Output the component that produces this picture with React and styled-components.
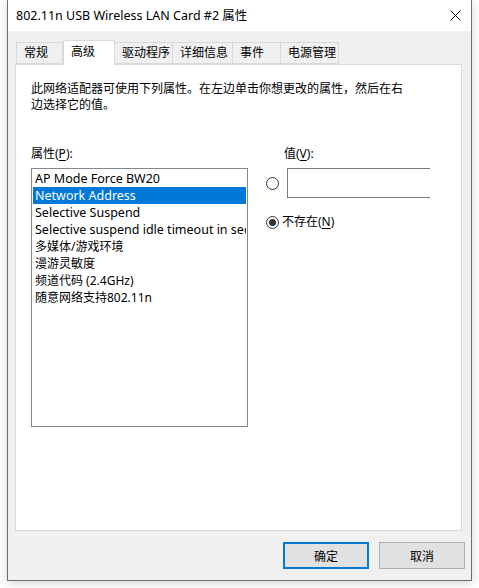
import React from "react";
import styled, { createGlobalStyle } from "styled-components";

const Global = createGlobalStyle`
  html, body { margin: 0; padding: 0; background: #ffffff; }
  body { font-family: "Segoe UI", "Noto Sans", "Noto Sans CJK SC", sans-serif; font-size: 12px; color: #000; }
`;

const Page = styled.div`
  width: 479px;
  height: 588px;
  padding-left: 7px;
  box-sizing: border-box;
  overflow: hidden;
`;

const Win = styled.div`
  width: 465px;
  height: 581px;
  box-sizing: border-box;
  border: 1px solid #6e6e6e;
  border-top: none;
  background: #f0f0f0;
  box-shadow: 0 2px 10px rgba(0, 0, 0, 0.18);
  display: flex;
  flex-direction: column;
`;

const TitleBar = styled.div`
  height: 31px;
  background: #ffffff;
  display: flex;
  align-items: center;
  justify-content: space-between;
  padding: 0 10px 0 8px;
  flex-shrink: 0;
`;

const Title = styled.div`
  font-size: 12.5px;
  line-height: 16px;
  margin-top: 1px;
`;

const Body = styled.div`
  flex: 1;
  display: flex;
  flex-direction: column;
  padding: 9px 9px 0 7px;
`;

const TabRow = styled.div`
  display: flex;
  align-items: flex-end;
  height: 24px;
  padding-left: 1px;
  position: relative;
  z-index: 1;
`;

const Tab = styled.div`
  box-sizing: border-box;
  height: ${(p) => (p.$active ? "25px" : "22px")};
  margin-bottom: ${(p) => (p.$active ? "-1px" : "0")};
  width: ${(p) => p.$w}px;
  padding-left: 7px;
  border: 1px solid #d9d9d9;
  border-left: ${(p) => (p.$first || p.$active ? "1px solid #d9d9d9" : "none")};
  border-bottom: ${(p) => (p.$active ? "none" : "1px solid #d9d9d9")};
  background: ${(p) => (p.$active ? "#ffffff" : "#f0f0f0")};
  display: flex;
  align-items: ${(p) => (p.$active ? "flex-start" : "center")};
  padding-top: ${(p) => (p.$active ? "3px" : "0")};
  font-size: 12px;
  line-height: 16px;
`;

const Panel = styled.div`
  width: 447px;
  height: 467px;
  box-sizing: border-box;
  background: #ffffff;
  border: 1px solid #d9d9d9;
  padding: 16px 15px 0 15px;
  display: flex;
  flex-direction: column;
`;

const Desc = styled.div`
  width: 380px;
  line-height: 16px;
  font-size: 12px;
`;

const Columns = styled.div`
  display: flex;
  margin-top: 33px;
`;

const LeftCol = styled.div`
  width: 217px;
  display: flex;
  flex-direction: column;
`;

const Label = styled.div`
  line-height: 16px;
  height: 16px;
  margin-bottom: 6px;
  padding-left: ${(p) => p.$indent || 0}px;
`;

const U = styled.span`
  text-decoration: underline;
  text-underline-offset: 2px;
`;

const ListBox = styled.div`
  box-sizing: border-box;
  height: 259px;
  border: 1px solid #828790;
  padding: 1px;
  overflow: hidden;
`;

const Item = styled.div`
  height: 17px;
  line-height: 17px;
  padding-left: 2px;
  white-space: nowrap;
  overflow: hidden;
  font-size: ${(p) => (p.$latin ? "12.5px" : "12px")};
  background: ${(p) => (p.$sel ? "#0078d7" : "transparent")};
  color: ${(p) => (p.$sel ? "#ffffff" : "#000")};
`;

const RightCol = styled.div`
  margin-left: 18px;
  display: flex;
  flex-direction: column;
`;

const RadioRow = styled.div`
  display: flex;
  align-items: center;
  margin-top: ${(p) => p.$mt || 0}px;
`;

const Radio = styled.div`
  width: 13px;
  height: 13px;
  box-sizing: border-box;
  border-radius: 50%;
  border: 1px solid #333333;
  background: #fff;
  display: flex;
  align-items: center;
  justify-content: center;
  flex-shrink: 0;
  &::after {
    content: "";
    display: ${(p) => (p.$on ? "block" : "none")};
    width: 7px;
    height: 7px;
    border-radius: 50%;
    background: #333333;
  }
`;

const ValueBox = styled.div`
  margin-left: 8px;
  width: 143px;
  height: 30px;
  box-sizing: border-box;
  border: 1px solid #7a7a7a;
  border-right: none;
  background: #fff;
`;

const RadioText = styled.span`
  margin-left: 3px;
  line-height: 16px;
`;

const Footer = styled.div`
  display: flex;
  justify-content: flex-end;
  gap: 10px;
  padding-top: 11px;
  margin-right: -3px;
`;

const Button = styled.div`
  width: 86px;
  height: 27px;
  box-sizing: border-box;
  background: #e1e1e1;
  border: ${(p) => (p.$default ? "2px solid #0078d7" : "1px solid #adadad")};
  display: flex;
  align-items: center;
  justify-content: center;
  font-size: 12px;
`;

const CloseIcon = () => (
  <svg width="11" height="11" viewBox="0 0 11 11" style={{ display: "block" }}>
    <path d="M0.5 0.5 L10.5 10.5 M10.5 0.5 L0.5 10.5" stroke="#000" strokeWidth="1" fill="none" />
  </svg>
);

const items = [
  { t: "AP Mode Force BW20", latin: true },
  { t: "Network Address", latin: true },
  { t: "Selective Suspend", latin: true },
  { t: "Selective suspend idle timeout in seconds", latin: true },
  { t: "多媒体/游戏环境" },
  { t: "漫游灵敏度" },
  { t: "频道代码 (2.4GHz)" },
  { t: "随意网络支持802.11n" },
];

const tabs = [
  { t: "常规", w: 47 },
  { t: "高级", w: 52, active: true },
  { t: "驱动程序", w: 58 },
  { t: "详细信息", w: 60 },
  { t: "事件", w: 48 },
  { t: "电源管理", w: 58 },
];

export default function App() {
  return (
    <Page>
      <Global />
      <Win>
        <TitleBar>
          <Title>802.11n USB Wireless LAN Card #2 属性</Title>
          <CloseIcon />
        </TitleBar>
        <Body>
          <TabRow>
            {tabs.map((tb, i) => (
              <Tab key={tb.t} $w={tb.w} $active={tb.active} $first={i === 0}>
                {tb.t}
              </Tab>
            ))}
          </TabRow>
          <Panel>
            <Desc>此网络适配器可使用下列属性。在左边单击你想更改的属性，然后在右边选择它的值。</Desc>
            <Columns>
              <LeftCol>
                <Label>
                  属性(<U>P</U>):
                </Label>
                <ListBox>
                  {items.map((it, i) => (
                    <Item key={it.t} $sel={i === 1} $latin={it.latin}>
                      {it.t}
                    </Item>
                  ))}
                </ListBox>
              </LeftCol>
              <RightCol>
                <Label $indent={18}>
                  值(<U>V</U>):
                </Label>
                <RadioRow>
                  <Radio />
                  <ValueBox />
                </RadioRow>
                <RadioRow $mt={16}>
                  <Radio $on />
                  <RadioText>
                    不存在(<U>N</U>)
                  </RadioText>
                </RadioRow>
              </RightCol>
            </Columns>
          </Panel>
          <Footer>
            <Button $default>确定</Button>
            <Button>取消</Button>
          </Footer>
        </Body>
      </Win>
    </Page>
  );
}
